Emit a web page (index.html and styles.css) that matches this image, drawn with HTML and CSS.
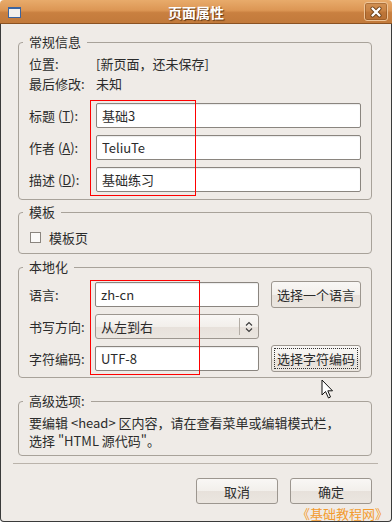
FILE: index.html
```html
<!DOCTYPE html>
<html lang="zh-CN">
<head>
    <meta charset="UTF-8">
    <title>页面属性</title>
    <link rel="stylesheet" href="styles.css">
</head>
<body>
    <div class="window">
        <div class="titlebar">
            <span class="win-icon"></span>
            <span class="title">页面属性</span>
            <span class="close">
                <svg width="12" height="12" viewBox="0 0 12 12">
                    <path d="M2.5 2.5 L9.5 9.5 M9.5 2.5 L2.5 9.5" stroke="#6b3f16" stroke-width="4" stroke-linecap="round"/>
                    <path d="M2.5 2.5 L9.5 9.5 M9.5 2.5 L2.5 9.5" stroke="#fff" stroke-width="2.4" stroke-linecap="round"/>
                </svg>
            </span>
        </div>

        <div class="content">
            <fieldset class="frame general">
                <legend>常规信息</legend>
                <div class="info">
                    <span>位置:</span><span>[新页面，还未保存]</span>
                    <span>最后修改:</span><span>未知</span>
                </div>
                <div class="fields">
                    <label>标题 (<u>T</u>):</label><input class="entry" value="基础3">
                    <label>作者 (<u>A</u>):</label><input class="entry" value="TeliuTe">
                    <label>描述 (<u>D</u>):</label><input class="entry" value="基础练习">
                </div>
            </fieldset>

            <fieldset class="frame template">
                <legend>模板</legend>
                <div class="check-row">
                    <span class="check"></span>
                    <span>模板页</span>
                </div>
            </fieldset>

            <fieldset class="frame locale">
                <legend>本地化</legend>
                <div class="locale-grid">
                    <label>语言:</label>
                    <input class="entry" value="zh-cn">
                    <button class="btn">选择一个语言</button>

                    <label>书写方向:</label>
                    <div class="combo">
                        <span class="combo-text">从左到右</span>
                        <span class="combo-arrows">
                            <svg width="8" height="12" viewBox="0 0 8 12">
                                <path d="M1 4.5 L4 1.5 L7 4.5 M1 7.5 L4 10.5 L7 7.5" fill="none" stroke="#3a3a3a" stroke-width="1.1"/>
                            </svg>
                        </span>
                    </div>
                    <span></span>

                    <label>字符编码:</label>
                    <input class="entry" value="UTF-8">
                    <button class="btn focused">选择字符编码</button>
                </div>
            </fieldset>

            <fieldset class="frame advanced">
                <legend>高级选项:</legend>
                <p>要编辑 &lt;head&gt; 区内容，请在查看菜单或编辑模式栏，<br>选择 "HTML 源代码"。</p>
            </fieldset>

            <div class="separator"></div>

            <div class="actions">
                <button class="btn">取消</button>
                <button class="btn">确定</button>
            </div>
        </div>

        <div class="mark mark-top"></div>
        <div class="mark mark-bottom"></div>

        <svg class="cursor" width="13" height="21" viewBox="0 0 13 21">
            <path d="M1 1 L1 16 L4.5 12.5 L7.5 19 L9.5 18 L6.8 11.8 L11.5 11.8 Z" fill="#fff" stroke="#111" stroke-width="1" stroke-linejoin="round"/>
        </svg>

        <span class="watermark">《基础教程网》</span>
    </div>
</body>
</html>
```

FILE: styles.css
```css
* {
    box-sizing: border-box;
}

body {
    margin: 0;
    background: #fff;
    font-family: "Noto Sans CJK SC", "DejaVu Sans", sans-serif;
    font-size: 13px;
    color: #2b2b2b;
}

.window {
    position: relative;
    width: 392px;
    height: 522px;
}

/* title bar */
.titlebar {
    height: 24px;
    border-bottom: 1px solid #8a5222;
    border-radius: 4px 4px 0 0;
    background: linear-gradient(to bottom, #e8ab6b 0%, #dc9654 45%, #c98040 55%, #c27a3b 100%);
    display: grid;
    grid-template-columns: 1fr auto 1fr;
    align-items: center;
}

.win-icon {
    width: 13px;
    height: 11px;
    margin: 1px 0 0 8px;
    border: 1px solid #3b64a0;
    border-top-width: 2px;
    background: #f3f0ed;
}

.title {
    color: #fff;
    font-weight: bold;
    font-size: 14px;
    line-height: 18px;
    text-shadow: 1px 1px 1px #5c3310;
}

.close {
    justify-self: end;
    width: 24px;
    height: 19px;
    margin-right: 4px;
    border: 1px solid #efc497;
    border-radius: 3px;
    background: rgba(150, 85, 30, 0.25);
    box-shadow: inset 0 0 0 1px rgba(110, 60, 20, 0.35);
    display: flex;
    align-items: center;
    justify-content: center;
}

/* dialog body */
.content {
    height: 498px;
    border: 1px solid #3a3a3a;
    border-top: 0;
    border-radius: 0 0 4px 4px;
    background: #efebe7;
    padding: 10px 19px 0 17px;
}

.frame {
    margin: 0;
    min-inline-size: 0;
    border: 1px solid #a8a29a;
    border-radius: 4px;
    padding: 4px 10px 7px;
}

.frame legend {
    padding: 0 6px;
    margin-left: -6px;
    line-height: 16px;
}

.info {
    display: grid;
    grid-template-columns: 67px 1fr;
    line-height: 20px;
}

.fields {
    display: grid;
    grid-template-columns: 67px 1fr;
    row-gap: 7px;
    align-items: center;
    margin-top: 9px;
}

.entry {
    height: 25px;
    width: 100%;
    min-width: 0;
    margin: 0;
    border: 1px solid #8a857f;
    border-radius: 2px;
    background: #fff;
    box-shadow: inset 0 1px 1px rgba(0,0,0,0.08);
    padding: 0 5px;
    font: inherit;
    color: #2b2b2b;
    outline: none;
}

.template {
    margin-top: 4px;
    padding: 7px 10px 6px;
}

.check-row {
    display: flex;
    align-items: center;
    height: 20px;
    gap: 8px;
}

.check {
    width: 11px;
    height: 11px;
    margin-left: 1px;
    border: 1px solid #8a857f;
    background: #fbfaf9;
}

.locale {
    margin-top: 5px;
    padding: 6px 10px 5px;
}

.locale-grid {
    display: grid;
    grid-template-columns: 66px 164px 1fr;
    grid-auto-rows: 27px;
    row-gap: 5px;
    align-items: center;
}

.locale-grid .btn {
    margin-left: 12px;
}

.btn {
    height: 27px;
    margin: 0;
    padding: 0 2px;
    border: 1px solid #9c968f;
    border-radius: 3px;
    background: linear-gradient(to bottom, #f9f7f5 0%, #f2efeb 50%, #e7e1db 52%, #ebe6e0 100%);
    font: inherit;
    color: #2b2b2b;
    white-space: nowrap;
}

.btn.focused {
    outline: 1px dotted #333;
    outline-offset: -4px;
}

.combo {
    height: 25px;
    display: flex;
    align-items: center;
    border: 1px solid #9c968f;
    border-radius: 3px;
    background: linear-gradient(to bottom, #f9f7f5 0%, #f2efeb 50%, #e7e1db 52%, #ebe6e0 100%);
}

.combo-text {
    flex: 1;
    padding-left: 5px;
}

.combo-arrows {
    width: 19px;
    height: 17px;
    border-left: 1px solid #b3ada5;
    display: flex;
    align-items: center;
    justify-content: center;
}

.advanced {
    margin-top: 15px;
    padding: 5px 10px 5px;
}

.advanced p {
    margin: 0;
    line-height: 18px;
}

.separator {
    margin: 7px -6px 0 -5px;
    border-top: 1px solid #bab3ab;
}

.actions {
    margin-top: 14px;
    display: flex;
    justify-content: flex-end;
    gap: 12px;
}

.actions .btn {
    width: 82px;
    height: 26px;
}

/* overlays */
.mark {
    position: absolute;
    border: 1px solid #ff0000;
}

.mark-top {
    left: 90px;
    top: 100px;
    width: 106px;
    height: 96px;
}

.mark-bottom {
    left: 90px;
    top: 280px;
    width: 110px;
    height: 95px;
}

.cursor {
    position: absolute;
    left: 321px;
    top: 379px;
}

.watermark {
    position: absolute;
    right: 4px;
    bottom: 1px;
    font-size: 13px;
    line-height: 15px;
    color: #f39b2e;
}
```
